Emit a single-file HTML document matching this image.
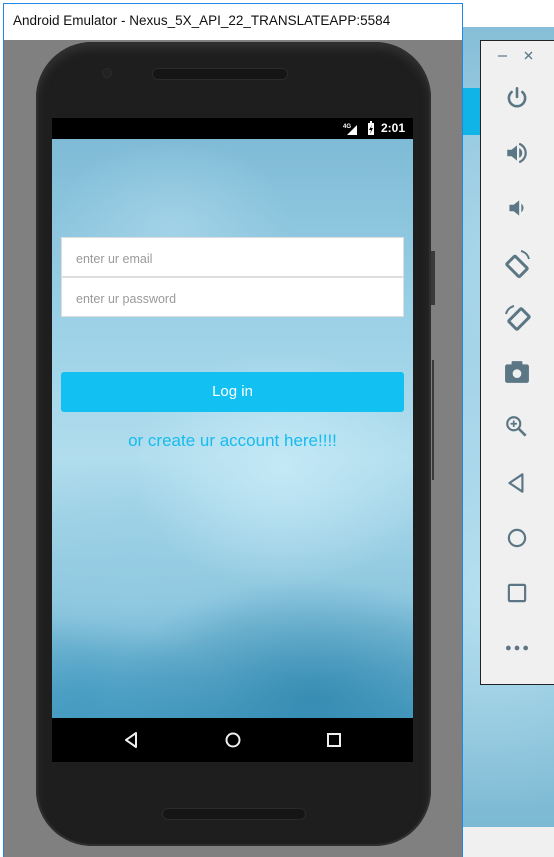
<!DOCTYPE html>
<html><head><meta charset="utf-8">
<style>
*{margin:0;padding:0;box-sizing:border-box}
body{width:554px;height:857px;overflow:hidden;position:relative;font-family:"Liberation Sans",sans-serif;background:#fff}
.bgtex{position:absolute;left:463px;top:27px;width:91px;height:800px;background-color:#8fc5dd;
background-image:radial-gradient(circle at 60% 30%,#a9d6ea 0,transparent 40%),radial-gradient(circle at 30% 70%,#b6e0f0 0,transparent 40%),linear-gradient(180deg,#88bfd8,#a5d3e8 50%,#7cb9d3);}
.cyan{position:absolute;left:463px;top:88px;width:91px;height:47px;background:#10b4e6}
.bot{position:absolute;left:463px;top:827px;width:91px;height:30px;background:#f0f0f0}
.win{position:absolute;left:3px;top:3px;width:460px;height:854px;background:#808080;border:1px solid #1e88e5;border-bottom:none}
.title{position:absolute;left:0;top:0;width:458px;height:36px;background:#fff;font-size:13.5px;color:#111;padding:9px 0 0 9px}
.phone{position:absolute;left:36px;top:42px;width:395px;height:804px;background:#1e1e1e;border-radius:56px;box-shadow:inset 0 0 0 2px #2e2e2e, inset 0 6px 10px #333}
.btn1{position:absolute;left:431px;top:251px;width:4px;height:54px;background:#3a3a3a}
.btn2{position:absolute;left:432px;top:360px;width:2px;height:120px;background:#3a3a3a}
.spk{position:absolute;height:12px;border-radius:6px;background:#151515;border:1px solid #2a2a2a}
.cam{position:absolute;left:102px;top:68px;width:10px;height:10px;border-radius:50%;background:#222;border:1px solid #2c2c2c}
.screen{position:absolute;left:52px;top:118px;width:361px;height:644px;background:#000}
.status{position:absolute;left:0;top:0;width:361px;height:21px;background:#000;color:#fff;font-size:12px;font-weight:bold}
.content{position:absolute;left:0;top:21px;width:361px;height:579px;
background:
radial-gradient(ellipse 120px 90px at 120px 90px,rgba(170,215,235,.7),transparent),
radial-gradient(ellipse 150px 120px at 230px 330px,rgba(200,235,248,.8),transparent),
radial-gradient(ellipse 130px 100px at 80px 420px,rgba(150,205,228,.6),transparent),
radial-gradient(ellipse 200px 120px at 260px 560px,rgba(40,130,170,.7),transparent),
radial-gradient(ellipse 140px 80px at 30px 560px,rgba(60,150,190,.6),transparent),
linear-gradient(180deg,#7fbbd6,#9ad0e6 30%,#b1dded 55%,#8cc6de 80%,#4fa0c4)}
.field{position:absolute;left:9px;width:343px;height:40px;background:#fff;font-size:12.5px;color:#9a9a9a;padding:14px 0 0 14px;border:1px solid #ddd}
.login{position:absolute;left:9px;top:233px;width:343px;height:40px;background:#12c0f2;border-radius:3px;color:#fff;text-align:center;font-size:15px;line-height:40px}
.link{position:absolute;left:0;top:292px;width:361px;text-align:center;color:#17bbee;font-size:17px}
.nav{position:absolute;left:0;top:600px;width:361px;height:44px;background:#000}
.tb{position:absolute;left:480px;top:40px;width:74px;height:645px;background:#f0f0f0;border:1px solid #222;border-right:none}
.tb svg{position:absolute;left:23px}
</style></head><body>
<div class="bgtex"></div><div class="cyan"></div><div class="bot"></div>
<div class="win">
 <div class="title">Android Emulator - Nexus_5X_API_22_TRANSLATEAPP:5584</div>
</div>
<div class="phone"></div>
<div class="btn1"></div><div class="btn2"></div>
<div class="spk" style="left:152px;top:68px;width:136px"></div>
<div class="spk" style="left:162px;top:808px;width:144px"></div>
<div class="cam"></div>
<div class="screen">
 <div class="status">
  <svg style="position:absolute;left:291px;top:4px" width="18" height="14"><text x="0" y="6" font-size="6" fill="#fff" font-family="Liberation Sans">4G</text><polygon points="4,13 14,13 14,3" fill="#fff"/></svg>
  <svg style="position:absolute;left:315px;top:3px" width="8" height="15"><rect x="1" y="2" width="6" height="12" fill="#fff"/><rect x="3" y="0" width="2" height="2" fill="#fff"/><path d="M5 4 L2 9 H4 L3 13 L6 7 H4 Z" fill="#000"/></svg>
  <span style="position:absolute;left:329px;top:3px">2:01</span>
 </div>
 <div class="content">
  <div class="field" style="top:98px">enter ur email</div>
  <div class="field" style="top:138px">enter ur password</div>
  <div class="login">Log in</div>
  <div class="link">or create ur account here!!!!</div>
 </div>
 <div class="nav">
  <svg style="position:absolute;left:70px;top:12px" width="20" height="20"><polygon points="14,3 14,17 4,10" fill="none" stroke="#eee" stroke-width="2" stroke-linejoin="round"/></svg>
  <svg style="position:absolute;left:171px;top:12px" width="20" height="20"><circle cx="10" cy="10" r="6.5" fill="none" stroke="#eee" stroke-width="2"/></svg>
  <svg style="position:absolute;left:272px;top:12px" width="20" height="20"><rect x="4" y="4" width="12" height="12" fill="none" stroke="#eee" stroke-width="2"/></svg>
 </div>
</div>
<div class="tb">
 <svg style="top:8px;left:16px" width="40" height="16"><line x1="1" y1="7" x2="10" y2="7" stroke="#5b7684" stroke-width="1.2"/><line x1="28" y1="3" x2="35" y2="10" stroke="#5b7684" stroke-width="1.3"/><line x1="35" y1="3" x2="28" y2="10" stroke="#5b7684" stroke-width="1.3"/></svg>
 <svg style="top:44px" width="26" height="26" viewBox="0 0 24 24"><path d="M12 3v8" stroke="#5b7684" stroke-width="2.4" stroke-linecap="round"/><path d="M7 6.5a7.5 7.5 0 1 0 10 0" fill="none" stroke="#5b7684" stroke-width="2.4" stroke-linecap="round"/></svg>
 <svg style="top:99px" width="26" height="26" viewBox="0 0 24 24"><path d="M3 9h4l5-4v14l-5-4H3z" fill="#5b7684"/><path d="M14 7.5a5 5 0 0 1 0 9z" fill="#5b7684"/><path d="M14 3.5a9 9 0 0 1 0 17" fill="none" stroke="#5b7684" stroke-width="2"/></svg>
 <svg style="top:154px" width="26" height="26" viewBox="0 0 24 24"><path d="M5 9h4l5-4v14l-5-4H5z" fill="#5b7684"/><path d="M16 8a5 5 0 0 1 0 8z" fill="#5b7684"/></svg>
 <svg style="top:208px" width="28" height="30" viewBox="0 0 28 30"><rect x="6" y="8" width="12" height="18" rx="1" transform="rotate(-45 13 16)" fill="none" stroke="#5b7684" stroke-width="3"/><path d="M17 2a11 11 0 0 1 8 8" fill="none" stroke="#5b7684" stroke-width="2"/></svg>
 <svg style="top:263px" width="28" height="30" viewBox="0 0 28 30"><rect x="9" y="6" width="12" height="18" rx="1" transform="rotate(45 15 15)" fill="none" stroke="#5b7684" stroke-width="3"/><path d="M10 2a11 11 0 0 0-8 8" fill="none" stroke="#5b7684" stroke-width="2"/></svg>
 <svg style="top:318px" width="26" height="26" viewBox="0 0 24 24"><rect x="1" y="5" width="22" height="17" rx="2" fill="#5b7684"/><rect x="7" y="2" width="10" height="4" rx="1" fill="#5b7684"/><circle cx="12" cy="13.5" r="4" fill="#f0f0f0"/></svg>
 <svg style="top:373px" width="26" height="26" viewBox="0 0 24 24"><circle cx="9" cy="9" r="6" fill="none" stroke="#5b7684" stroke-width="2"/><path d="M13.5 13.5L20 20" stroke="#5b7684" stroke-width="2.4"/><path d="M9 6v6M6 9h6" stroke="#5b7684" stroke-width="1.6"/></svg>
 <svg style="top:429px" width="26" height="26" viewBox="0 0 24 24"><polygon points="17,4 17,20 5,12" fill="none" stroke="#5b7684" stroke-width="2" stroke-linejoin="round"/></svg>
 <svg style="top:484px" width="26" height="26" viewBox="0 0 24 24"><circle cx="12" cy="12" r="7.5" fill="none" stroke="#5b7684" stroke-width="2"/></svg>
 <svg style="top:539px" width="26" height="26" viewBox="0 0 24 24"><rect x="4.5" y="4.5" width="15" height="15" rx="1" fill="none" stroke="#5b7684" stroke-width="2"/></svg>
 <svg style="top:594px" width="26" height="26" viewBox="0 0 24 24"><circle cx="4" cy="12" r="2.2" fill="#5b7684"/><circle cx="12" cy="12" r="2.2" fill="#5b7684"/><circle cx="20" cy="12" r="2.2" fill="#5b7684"/></svg>
</div>
</body></html>
